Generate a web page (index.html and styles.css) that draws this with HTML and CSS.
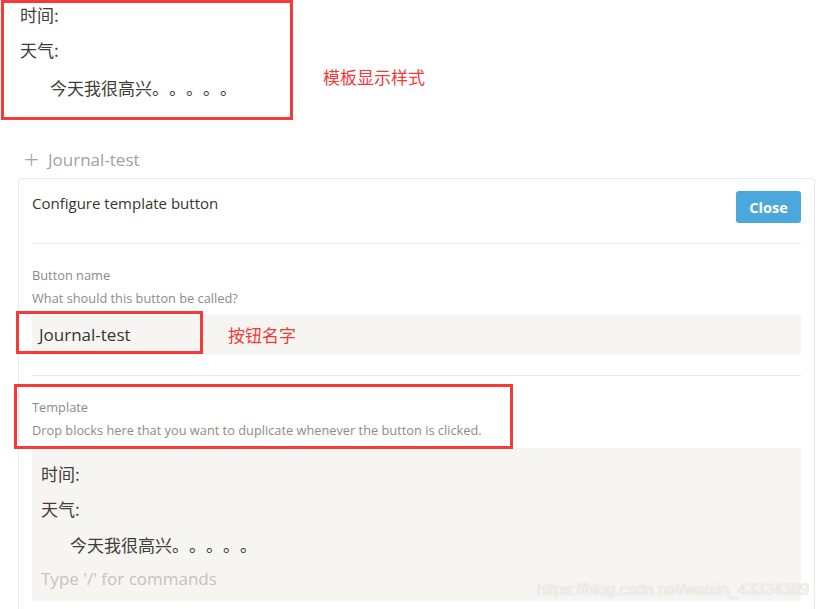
FILE: index.html
```html
<!DOCTYPE html>
<html lang="zh">
<head>
<meta charset="utf-8">
<title>Template button</title>
<link rel="stylesheet" href="styles.css">
</head>
<body>
<div class="page">
  <div class="preview">
    <div class="line">时间:</div>
    <div class="line second">天气:</div>
    <div class="line indent third">今天我很高兴。。。。。</div>
  </div>

  <div class="tpl-button"><span class="plus">+</span><span>Journal-test</span></div>

  <div class="panel">
    <div class="panel-head">
      <div class="panel-title">Configure template button</div>
      <button class="close-btn">Close</button>
    </div>
    <div class="divider"></div>

    <div class="field first-field">
      <div class="label">Button name</div>
      <div class="desc">What should this button be called?</div>
      <div class="input">Journal-test</div>
    </div>
    <div class="divider"></div>

    <div class="field second-field">
      <div class="label">Template</div>
      <div class="desc">Drop blocks here that you want to duplicate whenever the button is clicked.</div>
      <div class="template-area">
        <div class="tline t1">时间:</div>
        <div class="tline t2">天气:</div>
        <div class="tline t3 indent2">今天我很高兴。。。。。</div>
        <div class="tline t4 placeholder">Type '/' for commands</div>
      </div>
    </div>
  </div>

  <div class="mark mark-preview"></div>
  <div class="note note-preview">模板显示样式</div>
  <div class="mark mark-name"></div>
  <div class="note note-name">按钮名字</div>
  <div class="mark mark-template"></div>
  <div class="watermark">https://blog.csdn.net/weixin_43334389</div>
</div>
</body>
</html>
```

FILE: styles.css
```css
* { box-sizing: border-box; }
html, body {
  margin: 0;
  padding: 0;
  background: #ffffff;
}
body {
  font-family: "Open Sans", "Noto Sans CJK SC", sans-serif;
  color: #37352f;
  width: 818px;
  height: 609px;
  overflow: hidden;
  text-spacing-trim: space-all;
}
.page {
  position: relative;
  width: 818px;
  height: 609px;
}
.preview {
  padding-left: 20px;
  font-family: "Noto Sans CJK SC", sans-serif;
  font-size: 17px;
  color: #3f3d38;
}
.line {
  height: 30px;
  line-height: 30px;
}
.line.second { margin-top: 5px; }
.line.third { margin-top: 8px; }
.indent { padding-left: 30px; }
.line, .tline, .note { text-spacing-trim: space-all; }

.tpl-button {
  margin-top: 44px;
  margin-left: 24px;
  height: 26px;
  line-height: 26px;
  font-size: 17px;
  color: #a3a29f;
  display: flex;
  align-items: center;
}
.plus {
  font-size: 26px;
  font-weight: 300;
  width: 24px;
  line-height: 26px;
  margin-top: -2px;
}

.panel {
  margin-top: 5px;
  margin-left: 18px;
  width: 797px;
  height: 440px;
  border: 1px solid #e9e9e7;
  border-bottom: none;
  border-radius: 4px 4px 0 0;
  padding: 12px 13px 0 13px;
}
.panel-head {
  display: flex;
  justify-content: space-between;
  align-items: flex-start;
}
.panel-title {
  font-size: 15px;
  line-height: 24px;
  color: #37352f;
}
.close-btn {
  width: 65px;
  height: 32px;
  border: none;
  border-radius: 3px;
  background: #4aa8dc;
  color: #ffffff;
  font-family: "Open Sans", sans-serif;
  font-weight: 700;
  font-size: 14.5px;
  padding: 0;
}
.divider {
  height: 1px;
  background: #ebebea;
  margin-top: 20px;
}
.field { margin-top: 20px; }
.label, .desc {
  font-size: 12.8px;
  color: #8c8b87;
}
.label { line-height: 23px; }
.desc { line-height: 22px; }
.input {
  margin-top: 6px;
  height: 40px;
  line-height: 40px;
  background: #f6f5f2;
  border-radius: 3px;
  padding-left: 7px;
  font-size: 17px;
  color: #37352f;
}
.template-area {
  margin-top: 7px;
  height: 153px;
  background: #f6f5f2;
  border-radius: 3px;
  padding: 8px 9px 0 9px;
  font-family: "Noto Sans CJK SC", sans-serif;
  font-size: 17px;
  color: #3f3d38;
}
.tline {
  height: 35px;
  line-height: 35px;
}
.t3 { height: 33px; line-height: 33px; margin-top: 2px; }
.indent2 { padding-left: 29px; }
.placeholder {
  font-family: "Open Sans", sans-serif;
  color: #c4c3bf;
  font-size: 17px;
}

.mark {
  position: absolute;
  border: 3px solid #f63a3a;
}
.mark-preview { left: 1px; top: 0; width: 292px; height: 120px; }
.mark-name { left: 16px; top: 311px; width: 187px; height: 43px; }
.mark-template { left: 14px; top: 384px; width: 499px; height: 65px; }
.note {
  position: absolute;
  font-family: "Noto Sans CJK SC", sans-serif;
  font-size: 17px;
  line-height: 24px;
  color: #f23a3a;
}
.note-preview { left: 323px; top: 65px; }
.note-name { left: 228px; top: 323px; }
.watermark {
  position: absolute;
  left: 537px;
  top: 580px;
  font-family: "Liberation Sans", sans-serif;
  font-size: 16px;
  line-height: 20px;
  color: #f2f1ee;
  text-shadow: 0 0 1px #d8d7d4, 0 0 1px #d8d7d4;
}
```
